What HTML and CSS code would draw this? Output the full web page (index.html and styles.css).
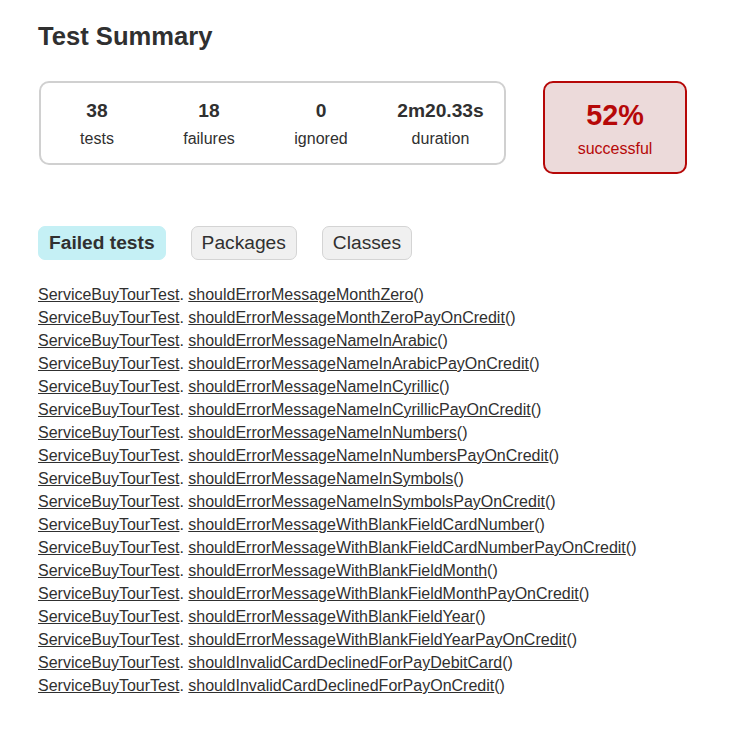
FILE: index.html
```
<!DOCTYPE html>
<html>
<head>
<meta charset="utf-8">
<title>Test results - Test Summary</title>
<link rel="stylesheet" href="styles.css">
</head>
<body>
<div class="content">
  <h1 class="title">Test Summary</h1>
  <div class="summary">
    <div class="summary-group">
      <div class="info-box"><div class="counter">38</div><p>tests</p></div>
      <div class="info-box"><div class="counter">18</div><p>failures</p></div>
      <div class="info-box"><div class="counter">0</div><p>ignored</p></div>
      <div class="info-box info-box-wide"><div class="counter">2m20.33s</div><p>duration</p></div>
    </div>
    <div class="info-box success-rate"><div class="percent">52%</div><p>successful</p></div>
  </div>
  <ul class="tab-links">
    <li class="tab selected"><a class="tab-link tab-link-bold" href="#tab0">Failed tests</a></li>
    <li class="tab"><a class="tab-link" href="#tab1">Packages</a></li>
    <li class="tab"><a class="tab-link" href="#tab2">Classes</a></li>
  </ul>
  <ul class="link-list">
    <li><a href="#">ServiceBuyTourTest</a>. <a href="#">shouldErrorMessageMonthZero</a>()</li>
    <li><a href="#">ServiceBuyTourTest</a>. <a href="#">shouldErrorMessageMonthZeroPayOnCredit</a>()</li>
    <li><a href="#">ServiceBuyTourTest</a>. <a href="#">shouldErrorMessageNameInArabic</a>()</li>
    <li><a href="#">ServiceBuyTourTest</a>. <a href="#">shouldErrorMessageNameInArabicPayOnCredit</a>()</li>
    <li><a href="#">ServiceBuyTourTest</a>. <a href="#">shouldErrorMessageNameInCyrillic</a>()</li>
    <li><a href="#">ServiceBuyTourTest</a>. <a href="#">shouldErrorMessageNameInCyrillicPayOnCredit</a>()</li>
    <li><a href="#">ServiceBuyTourTest</a>. <a href="#">shouldErrorMessageNameInNumbers</a>()</li>
    <li><a href="#">ServiceBuyTourTest</a>. <a href="#">shouldErrorMessageNameInNumbersPayOnCredit</a>()</li>
    <li><a href="#">ServiceBuyTourTest</a>. <a href="#">shouldErrorMessageNameInSymbols</a>()</li>
    <li><a href="#">ServiceBuyTourTest</a>. <a href="#">shouldErrorMessageNameInSymbolsPayOnCredit</a>()</li>
    <li><a href="#">ServiceBuyTourTest</a>. <a href="#">shouldErrorMessageWithBlankFieldCardNumber</a>()</li>
    <li><a href="#">ServiceBuyTourTest</a>. <a href="#">shouldErrorMessageWithBlankFieldCardNumberPayOnCredit</a>()</li>
    <li><a href="#">ServiceBuyTourTest</a>. <a href="#">shouldErrorMessageWithBlankFieldMonth</a>()</li>
    <li><a href="#">ServiceBuyTourTest</a>. <a href="#">shouldErrorMessageWithBlankFieldMonthPayOnCredit</a>()</li>
    <li><a href="#">ServiceBuyTourTest</a>. <a href="#">shouldErrorMessageWithBlankFieldYear</a>()</li>
    <li><a href="#">ServiceBuyTourTest</a>. <a href="#">shouldErrorMessageWithBlankFieldYearPayOnCredit</a>()</li>
    <li><a href="#">ServiceBuyTourTest</a>. <a href="#">shouldInvalidCardDeclinedForPayDebitCard</a>()</li>
    <li><a href="#">ServiceBuyTourTest</a>. <a href="#">shouldInvalidCardDeclinedForPayOnCredit</a>()</li>
  </ul>
</div>
</body>
</html>
```

FILE: styles.css
```
html, body {
  margin: 0;
  padding: 0;
  background: #ffffff;
}
body {
  font-family: "Liberation Sans", Arial, sans-serif;
  font-size: 16px;
  color: #303030;
}
a, a:visited {
  color: #303030;
}
.content {
  padding: 22px 38px 30px 38px;
}
.title {
  font-size: 25.6px;
  font-weight: bold;
  margin: 0 0 29px 0;
}
.summary {
  display: flex;
  align-items: flex-start;
  padding: 1px 0;
  margin-bottom: 40px;
}
.summary-group {
  display: flex;
  gap: 2px;
  padding: 0 1px;
  margin-left: 1px;
  border: solid 2px #d0d0d0;
  border-radius: 10px;
}
.info-box {
  width: 110px;
  padding: 16px 0 14px 0;
  text-align: center;
  margin: 1px 0;
}
.info-box p {
  margin: 0;
}
.info-box-wide {
  width: 125px;
}
.counter {
  font-size: 19.2px;
  font-weight: bold;
  margin-bottom: 8px;
}
.success-rate {
  width: 140px;
  margin: 0 0 0 37px;
  border: solid 2px #b60808;
  border-radius: 10px;
  background-color: #ecdada;
  color: #b60808;
}
.percent {
  font-size: 28.8px;
  font-weight: bold;
  margin-bottom: 8px;
}
.tab-links {
  display: flex;
  list-style: none;
  margin: 0;
  padding: 11px 0 10px 0;
}
.tab {
  padding: 5px 10px;
  margin-right: 25px;
  border: solid 1px #d4d4d4;
  border-radius: 7px;
  background-color: #f0f0f0;
}
.tab.selected {
  background-color: #c5f0f5;
  border-color: #c5f0f5;
}
.tab-link {
  display: block;
  font-size: 19.2px;
  text-decoration: none;
}
.tab-link-bold {
  font-weight: bold;
}
.link-list {
  list-style: none;
  padding: 0;
  margin: 16px 0 0 0;
}
.link-list li {
  margin-bottom: 5px;
}
```
